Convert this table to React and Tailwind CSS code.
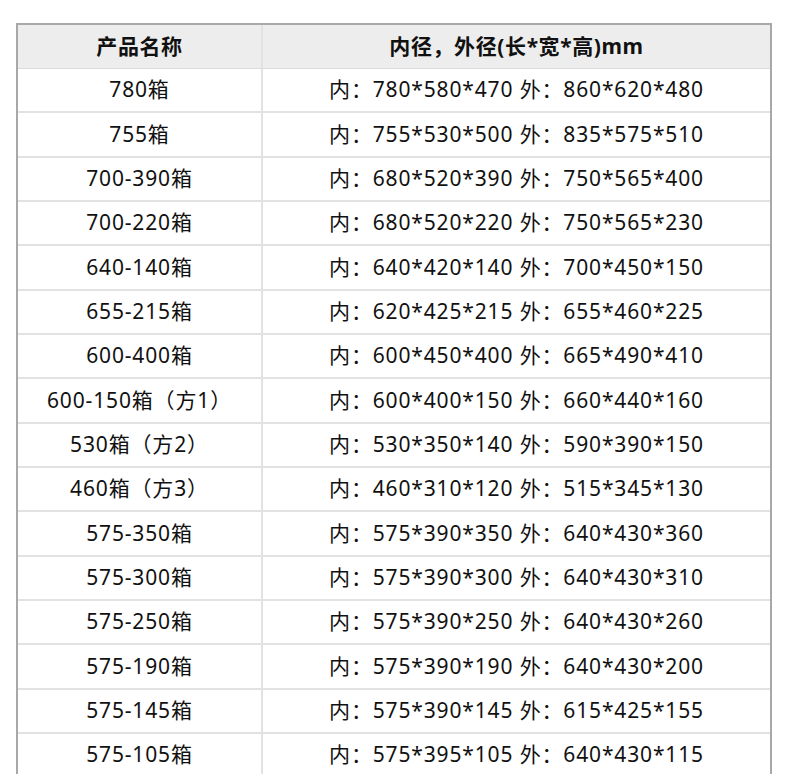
import React from "react";

const rows = [
  ["780箱", "内：780*580*470 外：860*620*480"],
  ["755箱", "内：755*530*500 外：835*575*510"],
  ["700-390箱", "内：680*520*390 外：750*565*400"],
  ["700-220箱", "内：680*520*220 外：750*565*230"],
  ["640-140箱", "内：640*420*140 外：700*450*150"],
  ["655-215箱", "内：620*425*215 外：655*460*225"],
  ["600-400箱", "内：600*450*400 外：665*490*410"],
  ["600-150箱（方1）", "内：600*400*150 外：660*440*160"],
  ["530箱（方2）", "内：530*350*140 外：590*390*150"],
  ["460箱（方3）", "内：460*310*120 外：515*345*130"],
  ["575-350箱", "内：575*390*350 外：640*430*360"],
  ["575-300箱", "内：575*390*300 外：640*430*310"],
  ["575-250箱", "内：575*390*250 外：640*430*260"],
  ["575-190箱", "内：575*390*190 外：640*430*200"],
  ["575-145箱", "内：575*390*145 外：615*425*155"],
  ["575-105箱", "内：575*395*105 外：640*430*115"],
];

const App = () => {
  return (
    <div className="w-[790px] h-[774px] overflow-hidden bg-white pt-[23px] pl-[16px] font-['Noto_Sans','Noto_Sans_CJK_SC',sans-serif] text-[#111]">
      <div className="w-[756px] border-l-2 border-t-2 border-r-2 border-[#a8a8a8]">
        <div className="grid grid-cols-[245px_1fr] h-[44px] bg-[#ededed] border-b border-[#dcdcdc] text-[21px] font-bold tracking-[0.6px]">
          <div className="flex items-center justify-center border-r-2 border-[#e2e2e2]">产品名称</div>
          <div className="flex items-center justify-center">内径，外径(长*宽*高)mm</div>
        </div>
        {rows.map((row, index) => (
          <div key={index} className="grid grid-cols-[245px_1fr] h-[44.33px] border-b-2 border-[#e2e2e2] text-[21px] tracking-[0.85px]">
            <div className="flex items-center justify-center border-r-2 border-[#e2e2e2]">{row[0]}</div>
            <div className="flex items-center justify-center">{row[1]}</div>
          </div>
        ))}
      </div>
    </div>
  );
};

export default App;
